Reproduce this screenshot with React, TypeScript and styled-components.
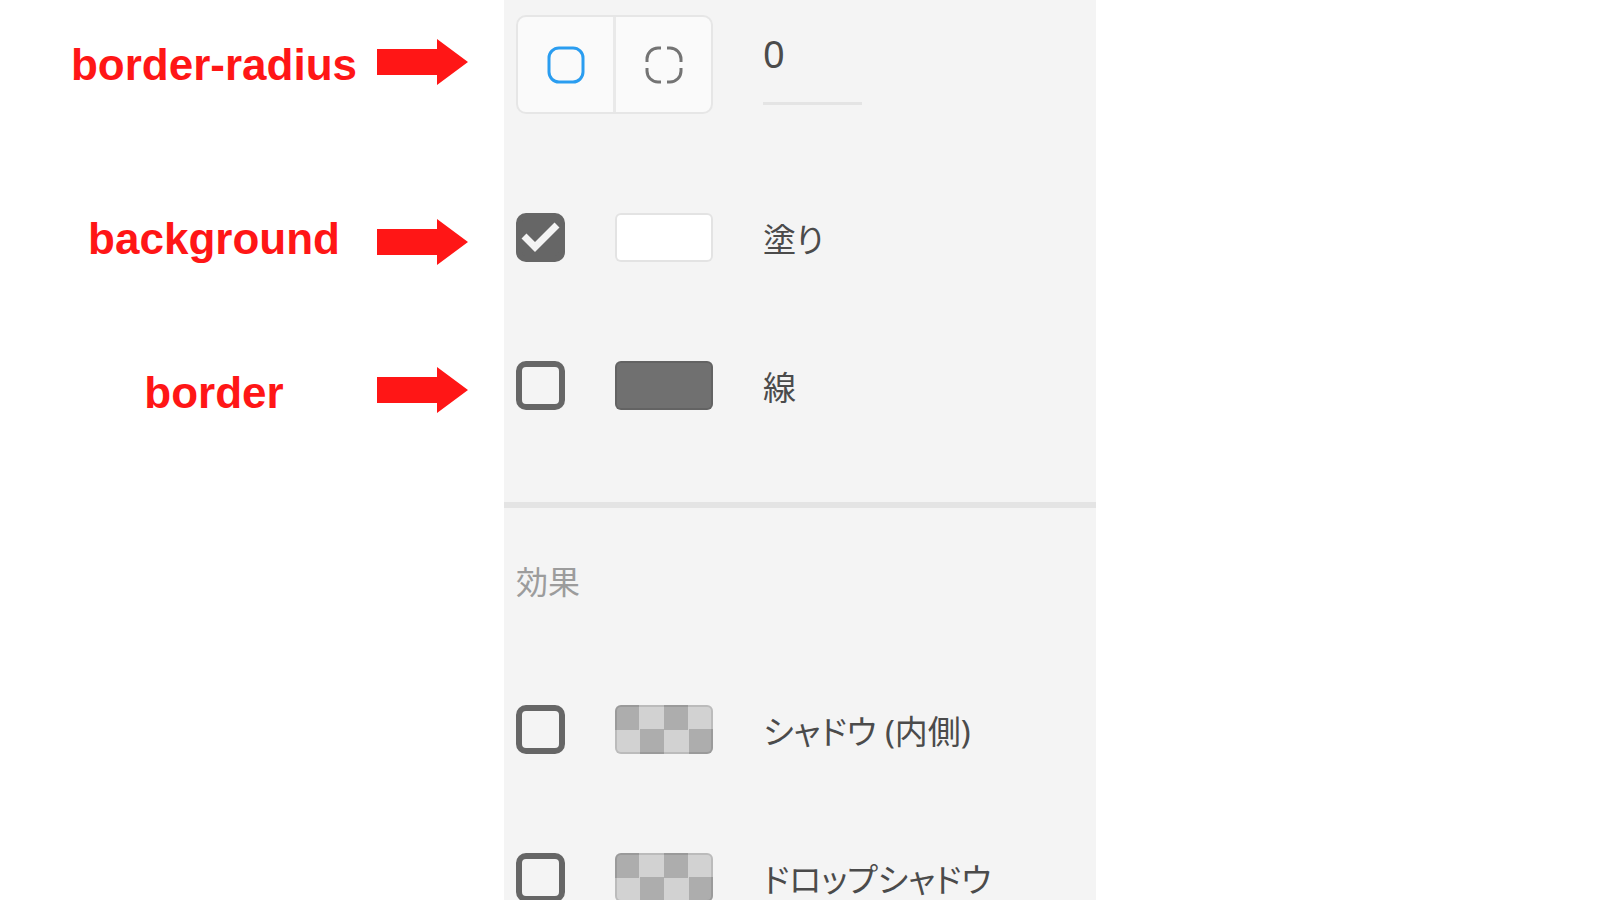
import { useId, useState } from "react";
import styled, { createGlobalStyle } from "styled-components";

const GlobalStyle = createGlobalStyle`
  *, *::before, *::after { box-sizing: border-box; }
  body {
    margin: 0;
    background: #ffffff;
    font-family: "Noto Sans", "Noto Sans CJK JP", sans-serif;
  }
`;

const Page = styled.main`
  display: grid;
  grid-template-columns: 63fr 74fr 63fr;
  height: 100vh;
  overflow: hidden;
`;

const Annotations = styled.ul`
  list-style: none;
  margin: 0;
  padding: 39px 36px 0 67px;
`;

const Annotation = styled.li<{ $align: "flex-start" | "flex-end"; $gapAfter: number }>`
  display: flex;
  align-items: ${({ $align }) => $align};
  gap: 16px;
  margin-bottom: ${({ $gapAfter }) => $gapAfter}px;
`;

const Property = styled.span`
  flex: 1;
  color: #ff1616;
  font: bold 44px/52px "Liberation Sans", Arial, sans-serif;
  text-align: center;
  white-space: nowrap;
`;

const ArrowShape = styled.svg`
  flex: none;
  width: 91px;
  height: 46px;
  fill: #ff1616;
`;

const Panel = styled.section`
  background: #f4f4f4;
  min-height: 100%;
`;

const Group = styled.div`
  display: flex;
  flex-direction: column;
  gap: 99px;
  padding: 15px 12px 92px;
`;

const EffectsGroup = styled(Group)`
  padding-top: 49px;
  border-top: 6px solid #e4e4e4;
`;

const Heading = styled.h2`
  margin: 0;
  color: #9c9c9c;
  font-size: 32px;
  font-weight: 400;
  line-height: 49px;
`;

const Row = styled.div`
  display: flex;
  align-items: center;
  gap: 50px;
`;

const CornerRow = styled(Row)`
  align-items: flex-start;
`;

const Segments = styled.div`
  display: flex;
  width: 197px;
  height: 99px;
  border: 2px solid #e6e6e6;
  border-radius: 10px;
  background: #fafafa;
  overflow: hidden;
`;

const Segment = styled.button<{ $active: boolean }>`
  flex: 1;
  display: grid;
  place-items: center;
  padding: 0;
  border: 0;
  background: transparent;
  color: ${({ $active }) => ($active ? "#2a9df0" : "#747474")};

  & + & {
    border-left: 3px solid #e9e9e9;
  }

  svg {
    width: 38px;
    height: 38px;
    fill: none;
    stroke: currentColor;
    stroke-width: 3;
  }
`;

const RadiusInput = styled.input`
  width: 99px;
  height: 90px;
  padding: 0 0 12px;
  border: 0;
  border-bottom: 3px solid #e4e4e4;
  outline: 0;
  background: transparent;
  color: #4b4b4b;
  font: 400 38px "Noto Sans", sans-serif;
`;

const CheckWrap = styled.span`
  position: relative;
  flex: none;
  width: 49px;
  height: 49px;

  svg {
    position: absolute;
    inset: 0;
    fill: none;
    stroke: #f4f4f4;
    stroke-width: 7;
    pointer-events: none;
  }
`;

const CheckInput = styled.input`
  appearance: none;
  display: block;
  width: 100%;
  height: 100%;
  margin: 0;
  border: 6px solid #666666;
  border-radius: 10px;
  background: #f4f4f4;

  &:checked {
    background: #666666;
  }
`;

type Fill = "white" | "gray" | "checker";

const fills: Record<Fill, string> = {
  white: "#ffffff",
  gray: "#707070",
  checker: "repeating-conic-gradient(#d2d2d2 0 25%, #adadad 0 50%) 0 0 / 49px 49px",
};

const Swatch = styled.button<{ $fill: Fill }>`
  flex: none;
  width: 98px;
  height: 49px;
  padding: 0;
  border: 0;
  border-radius: 6px;
  background: ${({ $fill }) => fills[$fill]};
  box-shadow: inset 0 0 0 2px rgba(0, 0, 0, 0.11);
`;

const Name = styled.label`
  padding-top: 4px;
  color: #4b4b4b;
  font-size: 33px;
  line-height: 36px;
  font-feature-settings: "palt";
  white-space: nowrap;
`;

function Arrow() {
  return (
    <ArrowShape viewBox="0 0 91 46" aria-hidden="true">
      <path d="M0 10H60V0L91 23L60 46V36H0Z" />
    </ArrowShape>
  );
}

function PaintRow({ name, fill, initial = false }: { name: string; fill: Fill; initial?: boolean }) {
  const id = useId();
  const [checked, setChecked] = useState(initial);
  return (
    <Row>
      <CheckWrap>
        <CheckInput id={id} type="checkbox" checked={checked} onChange={() => setChecked(!checked)} />
        {checked && (
          <svg viewBox="0 0 49 49" aria-hidden="true">
            <path d="M8 23L19 34L41 12" />
          </svg>
        )}
      </CheckWrap>
      <Swatch type="button" $fill={fill} aria-label={name} />
      <Name htmlFor={id}>{name}</Name>
    </Row>
  );
}

export default function App() {
  const [separate, setSeparate] = useState(false);
  const [radius, setRadius] = useState("0");
  return (
    <>
      <GlobalStyle />
      <Page>
        <Annotations>
          <Annotation $align="flex-start" $gapAfter={122}>
            <Property>border-radius</Property>
            <Arrow />
          </Annotation>
          <Annotation $align="flex-end" $gapAfter={102}>
            <Property>background</Property>
            <Arrow />
          </Annotation>
          <Annotation $align="flex-start" $gapAfter={0}>
            <Property>border</Property>
            <Arrow />
          </Annotation>
        </Annotations>
        <Panel>
          <Group>
            <CornerRow>
              <Segments role="group" aria-label="border-radius">
                <Segment
                  type="button"
                  $active={!separate}
                  aria-label="border-radius"
                  aria-pressed={!separate}
                  onClick={() => setSeparate(false)}
                >
                  <svg viewBox="0 0 38 38">
                    <rect x="2" y="2" width="34" height="34" rx="10" />
                  </svg>
                </Segment>
                <Segment
                  type="button"
                  $active={separate}
                  aria-label="border-radius × 4"
                  aria-pressed={separate}
                  onClick={() => setSeparate(true)}
                >
                  <svg viewBox="0 0 38 38">
                    <path d="M2 16V13A11 11 0 0 1 13 2H16M22 2H25A11 11 0 0 1 36 13V16M36 22V25A11 11 0 0 1 25 36H22M16 36H13A11 11 0 0 1 2 25V22" />
                  </svg>
                </Segment>
              </Segments>
              <RadiusInput
                aria-label="border-radius"
                value={radius}
                onChange={(event) => setRadius(event.target.value)}
              />
            </CornerRow>
            <PaintRow name="塗り" fill="white" initial />
            <PaintRow name="線" fill="gray" />
          </Group>
          <EffectsGroup>
            <Heading>効果</Heading>
            <PaintRow name="シャドウ (内側)" fill="checker" />
            <PaintRow name="ドロップシャドウ" fill="checker" />
          </EffectsGroup>
        </Panel>
      </Page>
    </>
  );
}
